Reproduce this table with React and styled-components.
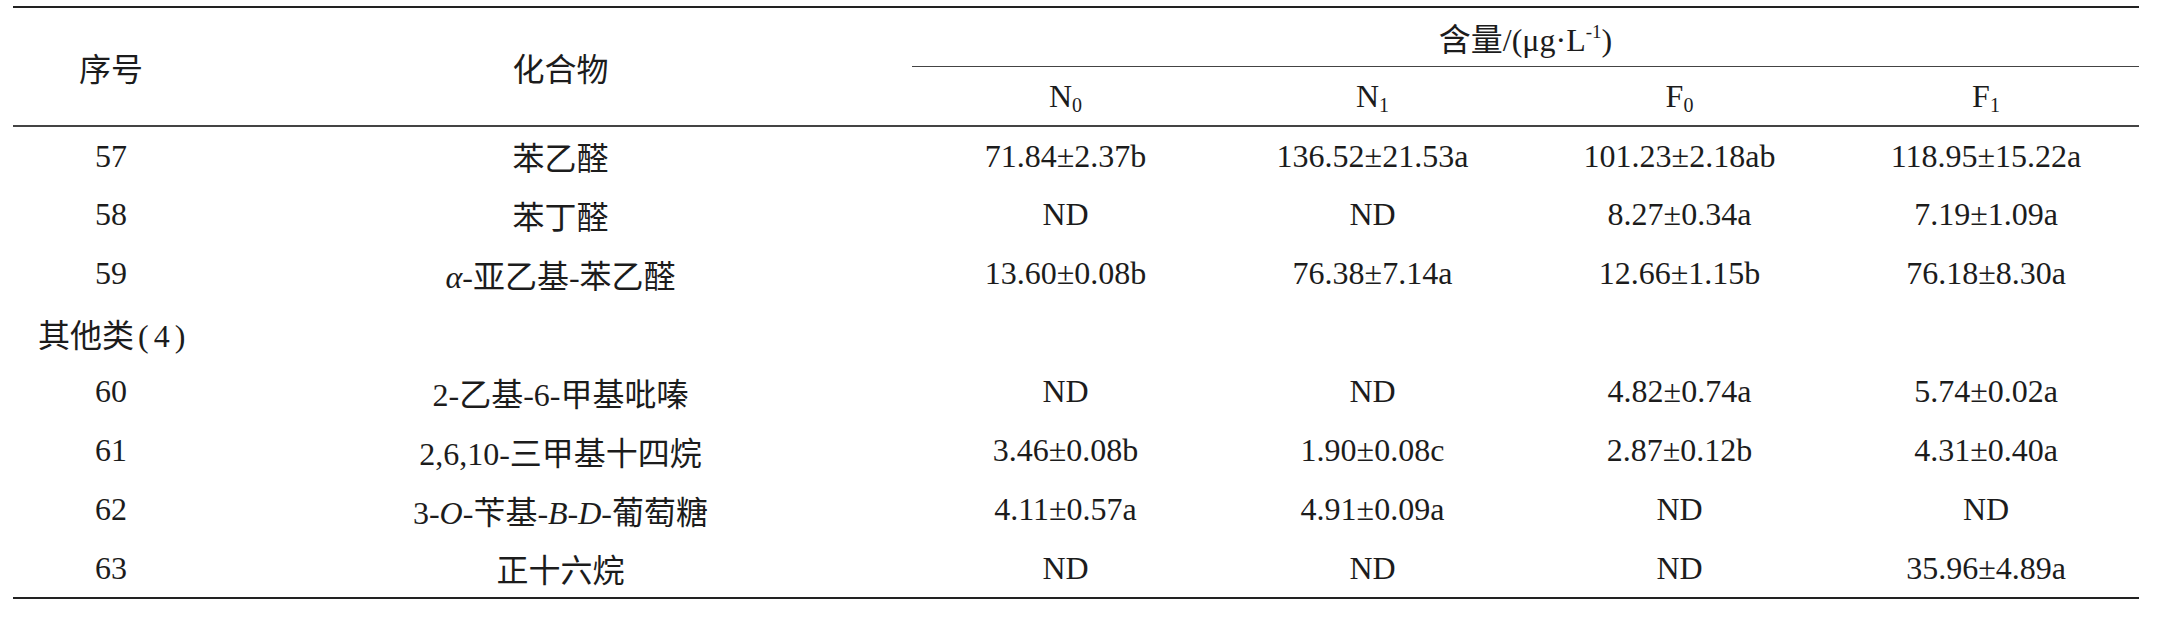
import React from "react";
import styled, { createGlobalStyle } from "styled-components";

const GlobalStyle = createGlobalStyle`
  html, body {
    margin: 0;
    padding: 0;
    background: #ffffff;
  }
`;

const Table = styled.table`
  border-collapse: collapse;
  table-layout: fixed;
  width: 2126px;
  margin: 6px 0 0 13px;
  font-family: "Liberation Serif", "Noto Sans CJK SC", serif;
  font-size: 32px;
  font-weight: 400;
  color: #1c1c1c;
  border-top: 2.5px solid #222;
  border-bottom: 2.5px solid #222;
`;

const HeadCell = styled.th`
  font-weight: 400;
  text-align: center;
  vertical-align: middle;
  padding: 0;
  height: ${({ $h }) => $h || 58}px;
  border-bottom: ${({ $line }) => ($line ? `${$line} solid #444` : "none")};
`;

const Row = styled.tr`
  height: 59px;
`;

const Cell = styled.td`
  text-align: ${({ $left }) => ($left ? "left" : "center")};
  padding: ${({ $left }) => ($left ? "0 0 0 25px" : "0")};
  vertical-align: middle;
  white-space: nowrap;
`;

const Sub = styled.sub`
  font-size: 20px;
  vertical-align: -5px;
  line-height: 0;
`;

const Sup = styled.sup`
  font-size: 19px;
  vertical-align: 13px;
  line-height: 0;
`;

const I = styled.i`
  font-style: italic;
`;

const Paren = styled.span`
  letter-spacing: 5px;
  padding-left: 4px;
`;

const rows = [
  ["57", "苯乙醛", "71.84±2.37b", "136.52±21.53a", "101.23±2.18ab", "118.95±15.22a"],
  ["58", "苯丁醛", "ND", "ND", "8.27±0.34a", "7.19±1.09a"],
  ["59", <><I>α</I>-亚乙基-苯乙醛</>, "13.60±0.08b", "76.38±7.14a", "12.66±1.15b", "76.18±8.30a"],
  "其他类",
  ["60", "2-乙基-6-甲基吡嗪", "ND", "ND", "4.82±0.74a", "5.74±0.02a"],
  ["61", "2,6,10-三甲基十四烷", "3.46±0.08b", "1.90±0.08c", "2.87±0.12b", "4.31±0.40a"],
  ["62", <>3-<I>O</I>-苄基-<I>B</I>-<I>D</I>-葡萄糖</>, "4.11±0.57a", "4.91±0.09a", "ND", "ND"],
  ["63", "正十六烷", "ND", "ND", "ND", "35.96±4.89a"],
];

export default function App() {
  return (
    <>
      <GlobalStyle />
      <Table>
        <colgroup>
          <col style={{ width: 196 }} />
          <col style={{ width: 703 }} />
          <col style={{ width: 307 }} />
          <col style={{ width: 307 }} />
          <col style={{ width: 307 }} />
          <col style={{ width: 306 }} />
        </colgroup>
        <thead>
          <tr>
            <HeadCell rowSpan={2} $line="2px">序号</HeadCell>
            <HeadCell rowSpan={2} $line="2px">化合物</HeadCell>
            <HeadCell colSpan={4} $line="1.5px">
              含量/(μg·L<Sup>-1</Sup>)
            </HeadCell>
          </tr>
          <tr>
            <HeadCell $line="2px">N<Sub>0</Sub></HeadCell>
            <HeadCell $line="2px">N<Sub>1</Sub></HeadCell>
            <HeadCell $line="2px">F<Sub>0</Sub></HeadCell>
            <HeadCell $line="2px">F<Sub>1</Sub></HeadCell>
          </tr>
        </thead>
        <tbody>
          {rows.map((r, i) =>
            typeof r === "string" ? (
              <Row key={i}>
                <Cell colSpan={6} $left>
                  {r}<Paren>(4)</Paren>
                </Cell>
              </Row>
            ) : (
              <Row key={i}>
                {r.map((c, j) => (
                  <Cell key={j}>{c}</Cell>
                ))}
              </Row>
            )
          )}
        </tbody>
      </Table>
    </>
  );
}
